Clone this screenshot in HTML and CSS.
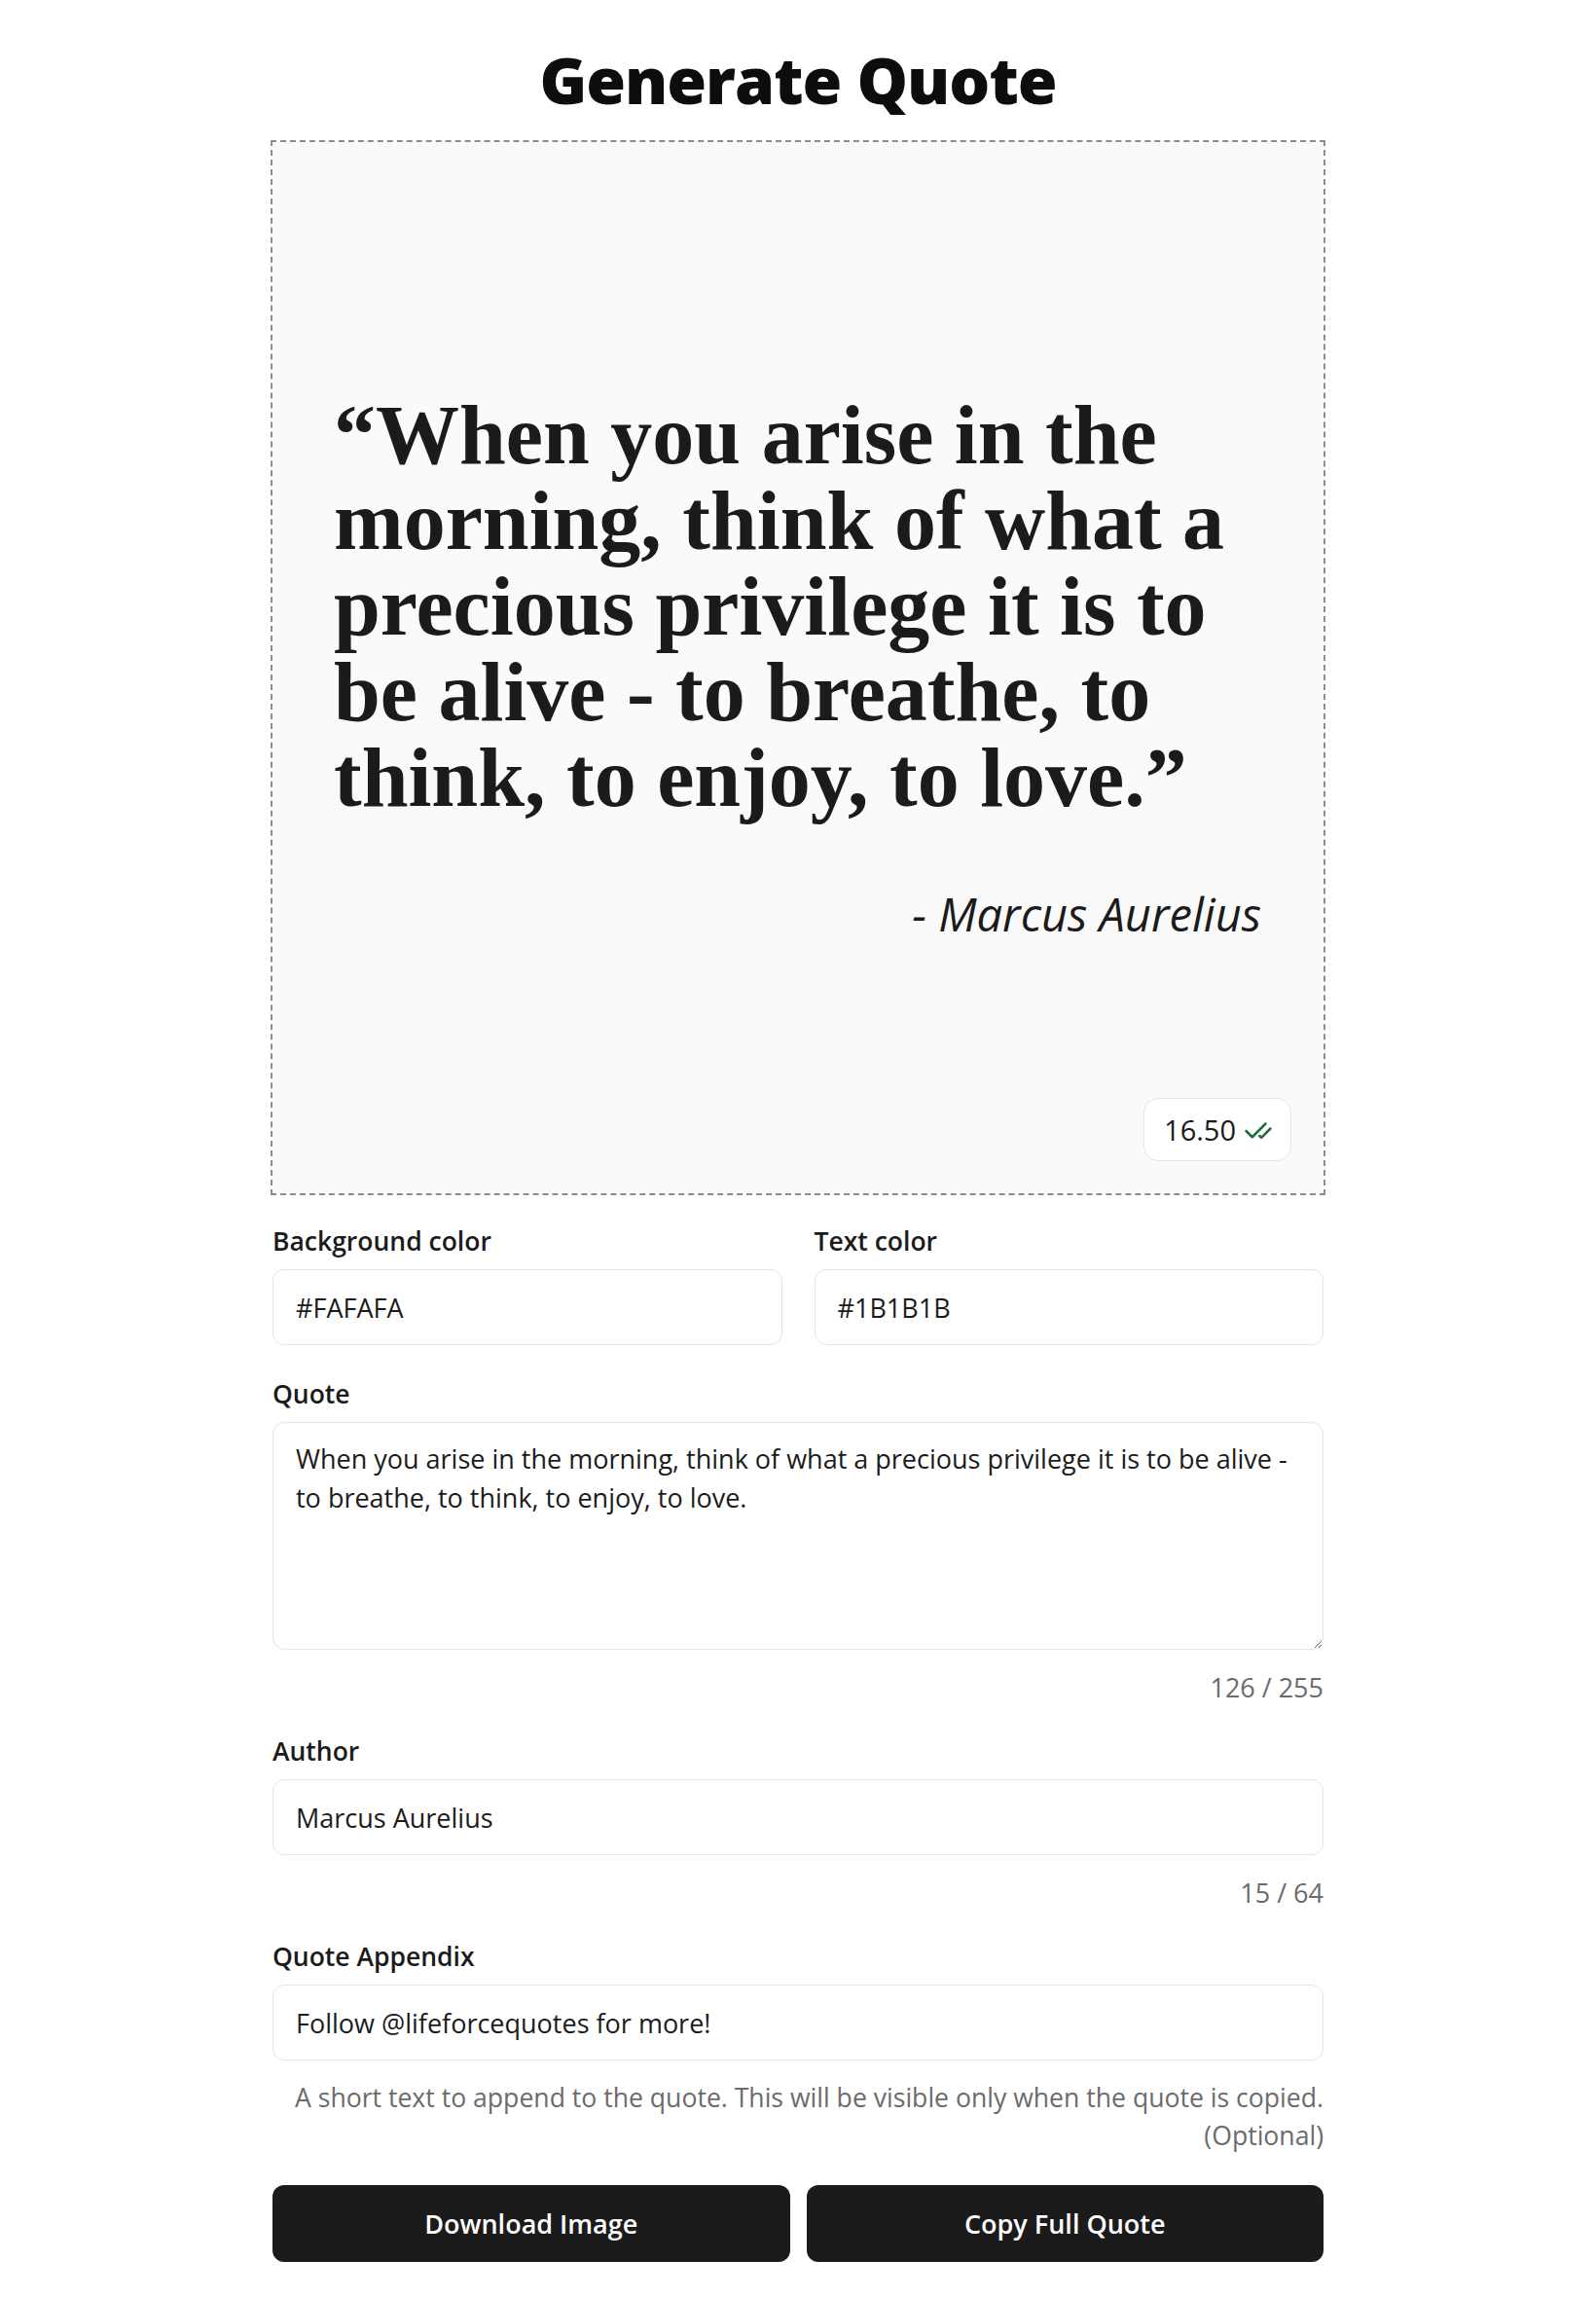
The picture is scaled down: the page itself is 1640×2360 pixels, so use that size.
FILE: index.html
```html
<!DOCTYPE html>
<html lang="en">
<head>
<meta charset="utf-8">
<title>Generate Quote</title>
<link rel="stylesheet" href="styles.css">
</head>
<body>
<main class="page">
  <h1 class="title">Generate Quote</h1>

  <section class="preview">
    <div class="preview-content">
      <p class="quote-text">“When you arise in the morning, think of what a precious privilege it is to be alive - to breathe, to think, to enjoy, to love.”</p>
      <p class="quote-author">- Marcus Aurelius</p>
    </div>
    <div class="badge">
      <span>16.50</span>
      <svg class="badge-icon" viewBox="0 0 24 24" fill="none" stroke="currentColor" stroke-width="2" stroke-linecap="round" stroke-linejoin="round"><path d="M18 6 7 17l-5-5"/><path d="m22 10-7.5 7.5L13 16"/></svg>
    </div>
  </section>

  <form class="form">
    <div class="row-2">
      <div class="field">
        <label class="label">Background color</label>
        <input class="input" type="text" value="#FAFAFA">
      </div>
      <div class="field">
        <label class="label">Text color</label>
        <input class="input" type="text" value="#1B1B1B">
      </div>
    </div>

    <div class="field">
      <label class="label">Quote</label>
      <textarea class="input textarea">When you arise in the morning, think of what a precious privilege it is to be alive - to breathe, to think, to enjoy, to love.</textarea>
      <p class="hint">126 / 255</p>
    </div>

    <div class="field">
      <label class="label">Author</label>
      <input class="input" type="text" value="Marcus Aurelius">
      <p class="hint">15 / 64</p>
    </div>

    <div class="field">
      <label class="label">Quote Appendix</label>
      <input class="input" type="text" value="Follow @lifeforcequotes for more!">
      <p class="hint hint-help">A short text to append to the quote. This will be visible only when the quote is copied. (Optional)</p>
    </div>

    <div class="actions">
      <button class="btn" type="button">Download Image</button>
      <button class="btn" type="button">Copy Full Quote</button>
    </div>
  </form>
</main>
</body>
</html>
```

FILE: styles.css
```css
* { box-sizing: border-box; }

body {
  margin: 0;
  background: #ffffff;
  color: #1b1b1b;
  font-family: "Open Sans", "Noto Sans", sans-serif;
}

.page {
  width: 1080px;
  margin: 0 auto;
  padding: 34px 0 40px;
}

.title {
  margin: 0 0 18px;
  text-align: center;
  font-family: "Open Sans", sans-serif;
  font-weight: 800;
  font-size: 66px;
  line-height: 94px;
  letter-spacing: -1px;
  color: #0d0d0d;
}

.preview {
  position: relative;
  width: 1080px;
  height: 1080px;
  background: #fafafa;
  outline: 2px dashed #8c8c8c;
  display: flex;
  align-items: center;
  padding: 0 64px 0 63px;
}

.preview-content {
  width: 100%;
}

.quote-text {
  margin: 0;
  font-family: "Liberation Serif", serif;
  font-weight: 700;
  font-size: 86px;
  line-height: 88px;
  color: #1b1b1b;
}

.quote-author {
  margin: 66px 0 0;
  text-align: right;
  font-style: italic;
  font-weight: 500;
  font-size: 47px;
  line-height: 60px;
  color: #1b1b1b;
}

.badge {
  position: absolute;
  right: 33px;
  bottom: 33px;
  height: 65px;
  padding: 0 18px 0 20px;
  display: flex;
  align-items: center;
  gap: 8px;
  background: #ffffff;
  border: 1.5px solid #e6e6e6;
  border-radius: 15px;
  font-size: 29px;
  color: #1b1b1b;
}

.badge-icon {
  width: 30px;
  height: 30px;
  color: #1f6b3f;
  margin-top: 2px;
}

.form {
  margin-top: 30px;
  display: flex;
  flex-direction: column;
}

.row-2 {
  display: grid;
  grid-template-columns: 1fr 1fr;
  gap: 33px;
  margin-bottom: 31px;
}

.field {
  display: flex;
  flex-direction: column;
}

.label {
  font-size: 26.5px;
  font-weight: 600;
  line-height: 38px;
  margin-bottom: 10px;
  color: #1b1b1b;
}

.input {
  width: 100%;
  height: 78px;
  padding: 0 23px;
  border: 1.5px solid #e4e4e4;
  border-radius: 12px;
  background: #ffffff;
  font-family: inherit;
  font-size: 27px;
  color: #1b1b1b;
  outline: none;
}

.textarea {
  height: 234px;
  padding: 17px 23px;
  line-height: 40px;
  resize: vertical;
}

.hint {
  margin: 19px 0 27px;
  text-align: right;
  font-size: 27px;
  line-height: 39px;
  color: #6b6b6b;
}

.hint-help {
  font-size: 26.6px;
}

.actions {
  display: grid;
  grid-template-columns: 1fr 1fr;
  gap: 17px;
  margin-top: 4px;
}

.btn {
  height: 79px;
  border: none;
  border-radius: 12px;
  background: #1b1b1b;
  color: #ffffff;
  font-family: inherit;
  font-size: 27px;
  font-weight: 600;
}
```
